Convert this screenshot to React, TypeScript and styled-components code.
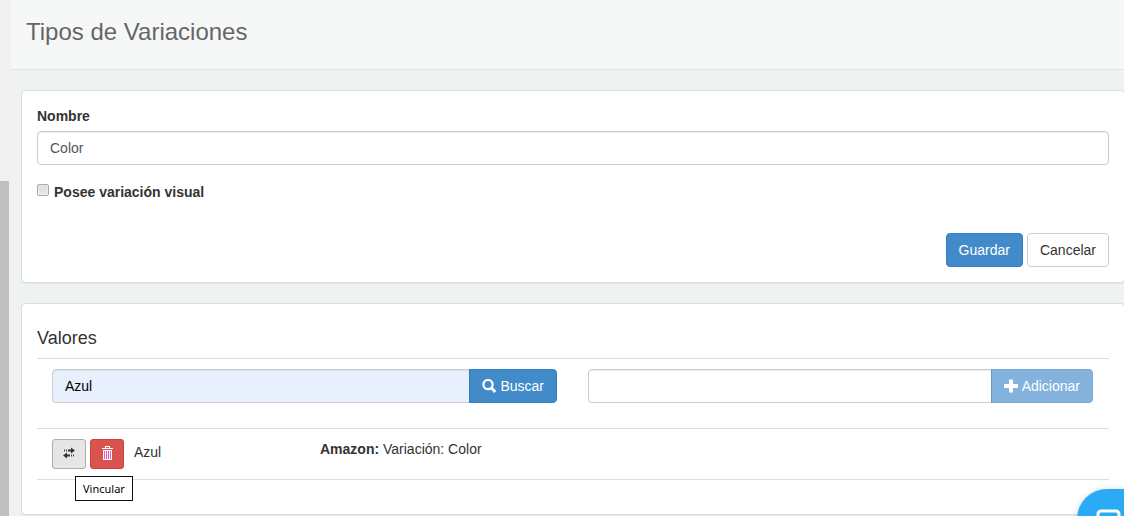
import React from "react";
import styled, { createGlobalStyle, css } from "styled-components";

const GlobalStyle = createGlobalStyle`
  *, *::before, *::after { box-sizing: border-box; }
  html, body { margin: 0; overflow: hidden; }
  body {
    background: #eef2f3;
    color: #333;
    font: 14px/20px "Liberation Sans", Arial, sans-serif;
  }
  input, button { font: inherit; }
`;

const Shell = styled.div`
  display: flex;
  min-height: 100vh;
`;

const ScrollTrack = styled.div`
  flex: none;
  width: 11px;
  padding-top: 181px;
  display: flex;
  background: linear-gradient(#f0f0f0 181px, #eef2f3 181px);
`;

const ScrollThumb = styled.div`
  width: 9px;
  background: #c1c0c0;
`;

const Main = styled.main`
  flex: 1;
  min-width: 0;
`;

const Header = styled.header`
  height: 70px;
  padding: 16px 15px;
  background: #f6f8f8;
  border-bottom: 1px solid #dee5e7;
`;

const Title = styled.h1`
  margin: 0;
  font-size: 24px;
  line-height: 32px;
  font-weight: 400;
  color: #666;
`;

const Content = styled.div`
  display: flex;
  flex-direction: column;
  gap: 20px;
  padding: 20px 0 20px 10px;
  margin-right: -1px;
`;

const Panel = styled.section`
  padding: 15px;
  background: #fff;
  border: 1px solid #ddd;
  border-radius: 4px;
  box-shadow: 0 1px 1px rgba(0, 0, 0, 0.05);
`;

const Label = styled.label`
  display: block;
  margin-bottom: 5px;
  font-weight: 700;
`;

const TextInput = styled.input<{ $filled?: boolean; $grouped?: boolean }>`
  display: block;
  flex: 1;
  min-width: 0;
  width: 100%;
  height: 34px;
  padding: 6px 12px;
  color: ${(p) => (p.$filled ? "#000" : "#555")};
  background: ${(p) => (p.$filled ? "#e8f0fe" : "#fff")};
  border: 1px solid #ccc;
  border-radius: ${(p) => (p.$grouped ? "4px 0 0 4px" : "4px")};
  box-shadow: inset 0 1px 1px rgba(0, 0, 0, 0.075);
  outline: none;
`;

const CheckLabel = styled.label`
  display: flex;
  align-items: flex-start;
  gap: 5px;
  margin-top: 17px;
  font-weight: 700;
`;

const Checkbox = styled.input`
  appearance: none;
  width: 12px;
  height: 12px;
  margin: 2px 0 0;
  border: 1px solid #a9a9a9;
  border-radius: 2px;
  background: linear-gradient(#dcdcdc, #e8e8e8);
  box-shadow: inset 0 0 0 1px rgba(255, 255, 255, 0.4);

  &:checked {
    background: #428bca;
  }
`;

const Actions = styled.div`
  display: flex;
  justify-content: flex-end;
  gap: 4px;
  margin-top: 31px;
`;

const tones = {
  primary: css`
    color: #fff;
    background: #428bca;
    border-color: #357ebd;
  `,
  plain: css`
    color: #333;
    background: #fff;
    border-color: #ccc;
  `,
  pressed: css`
    color: #333;
    background: #e6e6e6;
    border-color: #adadad;
  `,
  danger: css`
    color: #fff;
    background: #d9534f;
    border-color: #d43f3a;
  `,
};

const Button = styled.button<{ $tone: keyof typeof tones; $grouped?: boolean }>`
  display: flex;
  align-items: center;
  gap: 4px;
  flex: none;
  height: 34px;
  padding: 6px 12px;
  border: 1px solid;
  border-radius: 4px;
  white-space: nowrap;
  ${(p) => tones[p.$tone]}
  ${(p) =>
    p.$grouped &&
    css`
      margin-left: -1px;
      border-radius: 0 4px 4px 0;
    `}
  &:disabled {
    opacity: 0.65;
  }
`;

const IconButton = styled(Button)`
  justify-content: center;
  width: 34px;
  height: 30px;
  padding: 0 0 2px;
  border-radius: 3px;
`;

const Subtitle = styled.h2`
  margin: 9px 0 10px;
  font-size: 18px;
  line-height: 20px;
  font-weight: 400;
`;

const List = styled.div`
  border: solid #ddd;
  border-width: 1px 0;
  margin-bottom: 19px;
`;

const SearchRow = styled.div`
  display: grid;
  grid-template-columns: 1fr 1fr;
  gap: 31px;
  padding: 10px 16px 25px 15px;
`;

const InputGroup = styled.form`
  display: flex;
`;

const ValueRow = styled.div`
  display: grid;
  grid-template-columns: 1fr 3fr;
  border-top: 1px solid #ddd;
`;

const ValueCell = styled.div`
  display: flex;
  gap: 4px;
  padding: 10px 15px;
`;

const ValueName = styled.span`
  margin: 3px 6px;
`;

const LinkAnchor = styled.div`
  position: relative;
`;

const Tooltip = styled.span`
  position: absolute;
  z-index: 1;
  top: 37px;
  left: 23px;
  padding: 3px 7px;
  font: 11px/17px "Noto Sans", sans-serif;
  color: #000;
  background: #fff;
  border: 1px solid #111;
`;

const ChatButton = styled.button`
  position: fixed;
  right: -13px;
  bottom: -33px;
  width: 60px;
  height: 60px;
  padding: 0;
  border: 0;
  border-radius: 30px 0 0 30px;
  background: #2caaf5;
  box-shadow: 0 1px 6px rgba(0, 0, 0, 0.2);
`;

const SearchIcon = () => (
  <svg width="14" height="14" viewBox="0 0 14 14" fill="none" stroke="currentColor" aria-hidden="true">
    <circle cx="6" cy="5.6" r="4.6" strokeWidth="2.2" />
    <path d="M9.2 8.8l4.1 4.1" strokeWidth="3" />
  </svg>
);

const PlusIcon = () => (
  <svg width="14" height="14" viewBox="0 0 14 14" fill="currentColor" aria-hidden="true">
    <path d="M5 0.5h4v4.5h5v4H9v4.500H5V9H0V5h5z" />
  </svg>
);

const TransferIcon = () => (
  <svg width="12" height="12" viewBox="0 0 12 12" aria-hidden="true">
    <path fill="#333" d="M5 2.500h3V.5l4 3-4 3v-2H5zM7 7.500H4v-2l-4 3 4 3v-2h3z" />
    <path fill="#5b3349" d="M1 2.500h1v2H1zM3 2.500h1v2H3z" />
    <path fill="#334a60" d="M8 7.500h1v2H8zM10 7.500h1v2h-1z" />
  </svg>
);

const TrashIcon = () => (
  <svg width="12" height="14" viewBox="0 0 12 14" aria-hidden="true">
    <path fill="#fff" d="M4 0h5v2h3v1H1V2h3z" />
    <path fill="#d9534f" d="M5 1h3v1H5z" />
    <path fill="#fff" d="M2 4h9v10H2z" />
    <path fill="#ee55bb" d="M3 5h1v8H3zM5 5h1v8H5zM7 5h1v8H7zM9 5h1v8H9z" />
  </svg>
);

export default function App() {
  return (
    <Shell>
      <GlobalStyle />
      <ScrollTrack>
        <ScrollThumb />
      </ScrollTrack>
      <Main>
        <Header>
          <Title>Tipos de Variaciones</Title>
        </Header>
        <Content>
          <Panel>
            <Label htmlFor="nombre">Nombre</Label>
            <TextInput id="nombre" defaultValue="Color" />
            <CheckLabel>
              <Checkbox type="checkbox" />
              Posee variación visual
            </CheckLabel>
            <Actions>
              <Button type="button" $tone="primary">Guardar</Button>
              <Button type="button" $tone="plain">Cancelar</Button>
            </Actions>
          </Panel>
          <Panel>
            <Subtitle>Valores</Subtitle>
            <List>
              <SearchRow>
                <InputGroup>
                  <TextInput aria-label="Buscar" defaultValue="Azul" $filled $grouped />
                  <Button type="button" $tone="primary" $grouped>
                    <SearchIcon />
                    Buscar
                  </Button>
                </InputGroup>
                <InputGroup>
                  <TextInput aria-label="Adicionar" $grouped />
                  <Button type="button" $tone="primary" $grouped disabled>
                    <PlusIcon />
                    Adicionar
                  </Button>
                </InputGroup>
              </SearchRow>
              <ValueRow>
                <ValueCell>
                  <LinkAnchor>
                    <IconButton type="button" $tone="pressed" aria-label="Vincular" aria-describedby="link-tip">
                      <TransferIcon />
                    </IconButton>
                    <Tooltip id="link-tip" role="tooltip">Vincular</Tooltip>
                  </LinkAnchor>
                  <IconButton type="button" $tone="danger" aria-label="Eliminar">
                    <TrashIcon />
                  </IconButton>
                  <ValueName>Azul</ValueName>
                </ValueCell>
                <ValueCell>
                  <span>
                    <b>Amazon:</b> Variación: Color
                  </span>
                </ValueCell>
              </ValueRow>
            </List>
          </Panel>
        </Content>
      </Main>
      <ChatButton type="button" aria-label="Chat">
        <svg width="60" height="60" viewBox="0 0 60 60" fill="none" aria-hidden="true">
          <rect x="21" y="22" width="21" height="18" rx="3" stroke="#fff" strokeWidth="3" />
        </svg>
      </ChatButton>
    </Shell>
  );
}
